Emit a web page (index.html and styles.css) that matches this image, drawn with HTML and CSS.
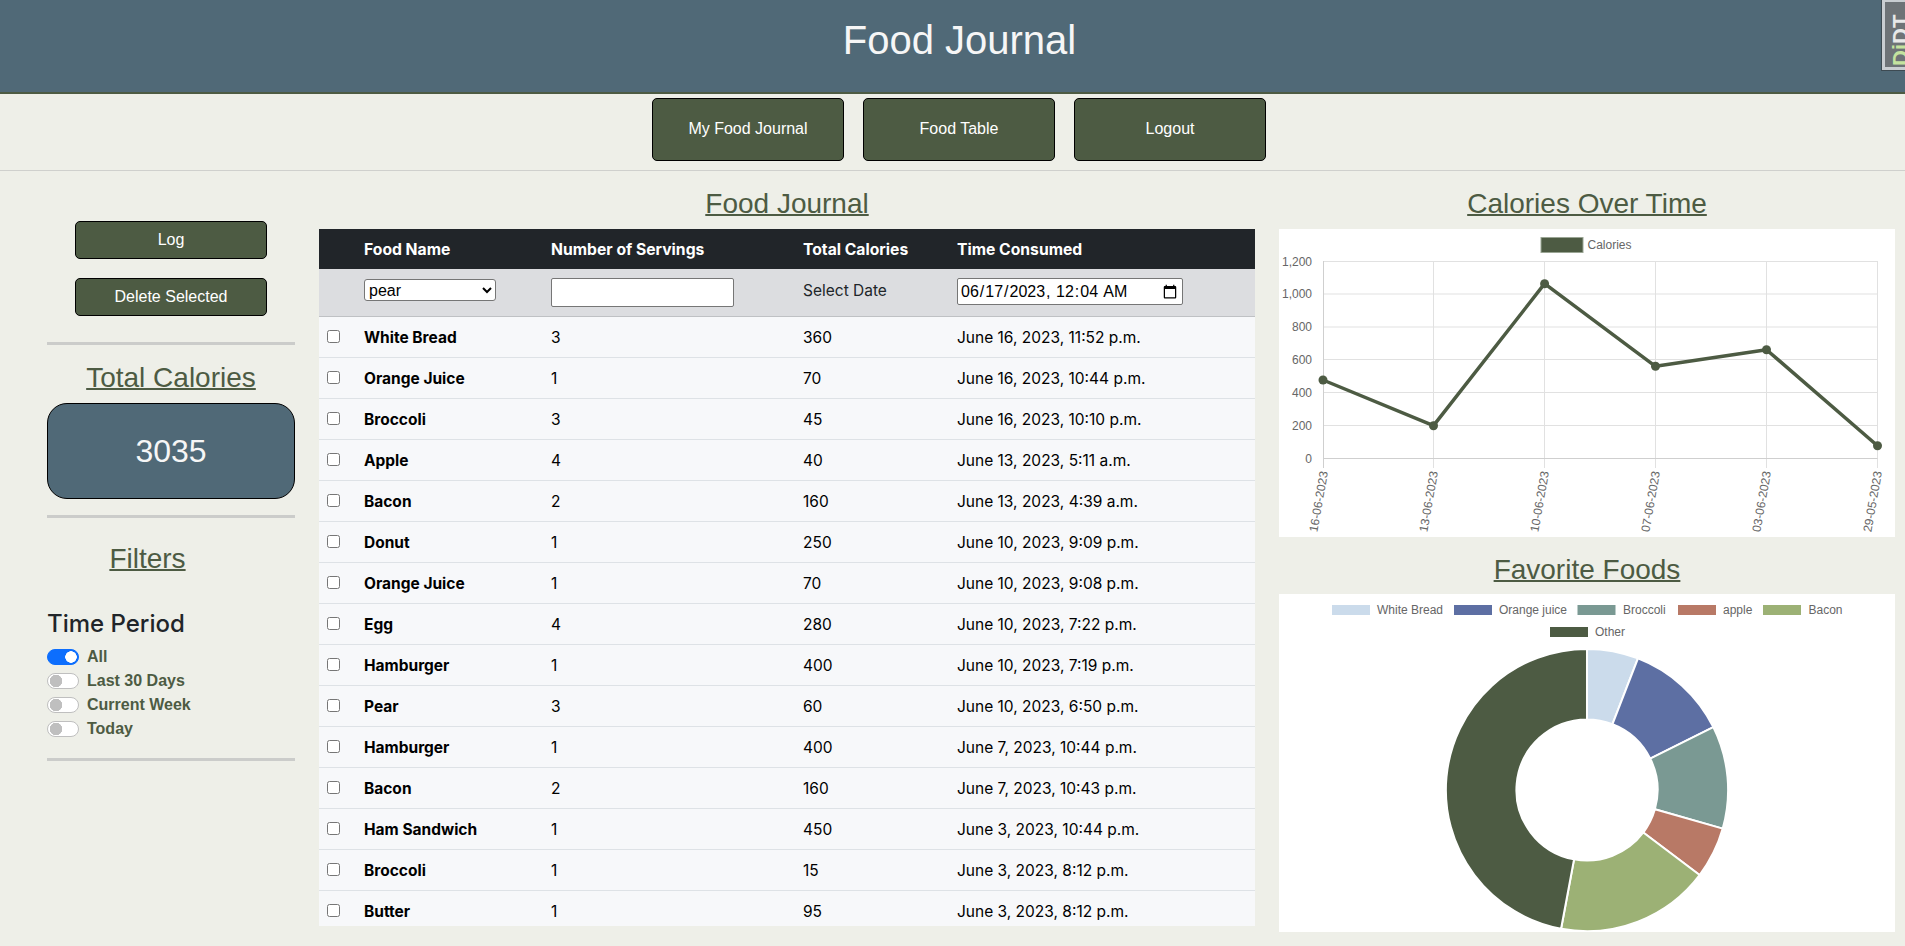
FILE: index.html
```html
<!DOCTYPE html>
<html lang="en">
<head>
<meta charset="utf-8">
<title>Food Journal</title>
<link rel="stylesheet" href="styles.css">
</head>
<body>
<header class="banner"><h1 class="banner-title">Food Journal</h1></header>
<a class="debug-handle" href="#"><span class="debug-text"><span class="debug-green">Dj</span>DT</span></a>
<nav class="nav">
  <button class="btn btn-nav">My Food Journal</button>
  <button class="btn btn-nav">Food Table</button>
  <button class="btn btn-nav">Logout</button>
</nav>
<main class="main">
  <aside class="side">
    <button class="btn btn-side">Log</button>
    <button class="btn btn-side btn-delete">Delete Selected</button>
    <hr class="rule rule-first">
    <h3 class="heading heading-total">Total Calories</h3>
    <div class="total-box">3035</div>
    <hr class="rule rule-second">
    <h3 class="heading heading-filters">Filters</h3>
    <h4 class="period-title">Time Period</h4>
    <label class="switch-row"><input class="switch" type="checkbox" checked><span>All</span></label>
    <label class="switch-row"><input class="switch" type="checkbox"><span>Last 30 Days</span></label>
    <label class="switch-row"><input class="switch" type="checkbox"><span>Current Week</span></label>
    <label class="switch-row"><input class="switch" type="checkbox"><span>Today</span></label>
    <hr class="rule rule-third">
  </aside>
  <section class="journal">
    <h3 class="heading">Food Journal</h3>
    <div class="table-wrap">
      <table class="table">
        <colgroup><col class="col-check"><col class="col-name"><col class="col-num"><col class="col-cal"><col class="col-time"></colgroup>
        <thead>
          <tr class="head-row"><th></th><th>Food Name</th><th>Number of Servings</th><th>Total Calories</th><th>Time Consumed</th></tr>
          <tr class="filter-row">
            <td></td>
            <td><select class="food-select"><option>pear</option></select></td>
            <td><input class="serv-input" type="text"></td>
            <td class="date-label">Select Date</td>
            <td><input class="date-input" type="datetime-local" value="2023-06-17T00:04"></td>
          </tr>
        </thead>
        <tbody>
          <tr><td><input type="checkbox" class="check"></td><th>White Bread</th><td>3</td><td>360</td><td>June 16, 2023, 11:52 p.m.</td></tr>
          <tr><td><input type="checkbox" class="check"></td><th>Orange Juice</th><td>1</td><td>70</td><td>June 16, 2023, 10:44 p.m.</td></tr>
          <tr><td><input type="checkbox" class="check"></td><th>Broccoli</th><td>3</td><td>45</td><td>June 16, 2023, 10:10 p.m.</td></tr>
          <tr><td><input type="checkbox" class="check"></td><th>Apple</th><td>4</td><td>40</td><td>June 13, 2023, 5:11 a.m.</td></tr>
          <tr><td><input type="checkbox" class="check"></td><th>Bacon</th><td>2</td><td>160</td><td>June 13, 2023, 4:39 a.m.</td></tr>
          <tr><td><input type="checkbox" class="check"></td><th>Donut</th><td>1</td><td>250</td><td>June 10, 2023, 9:09 p.m.</td></tr>
          <tr><td><input type="checkbox" class="check"></td><th>Orange Juice</th><td>1</td><td>70</td><td>June 10, 2023, 9:08 p.m.</td></tr>
          <tr><td><input type="checkbox" class="check"></td><th>Egg</th><td>4</td><td>280</td><td>June 10, 2023, 7:22 p.m.</td></tr>
          <tr><td><input type="checkbox" class="check"></td><th>Hamburger</th><td>1</td><td>400</td><td>June 10, 2023, 7:19 p.m.</td></tr>
          <tr><td><input type="checkbox" class="check"></td><th>Pear</th><td>3</td><td>60</td><td>June 10, 2023, 6:50 p.m.</td></tr>
          <tr><td><input type="checkbox" class="check"></td><th>Hamburger</th><td>1</td><td>400</td><td>June 7, 2023, 10:44 p.m.</td></tr>
          <tr><td><input type="checkbox" class="check"></td><th>Bacon</th><td>2</td><td>160</td><td>June 7, 2023, 10:43 p.m.</td></tr>
          <tr><td><input type="checkbox" class="check"></td><th>Ham Sandwich</th><td>1</td><td>450</td><td>June 3, 2023, 10:44 p.m.</td></tr>
          <tr><td><input type="checkbox" class="check"></td><th>Broccoli</th><td>1</td><td>15</td><td>June 3, 2023, 8:12 p.m.</td></tr>
          <tr><td><input type="checkbox" class="check"></td><th>Butter</th><td>1</td><td>95</td><td>June 3, 2023, 8:12 p.m.</td></tr>
        </tbody>
      </table>
    </div>
  </section>
  <section class="charts">
    <h3 class="heading">Calories Over Time</h3>
    <div class="chart chart-line">
      <svg class="chart-svg" width="616" height="308" viewBox="0 0 616 308">
        <rect class="swatch-line" x="262" y="8.5" width="42" height="15"/>
        <text class="legend-text" x="308.500" y="20">Calories</text>
        <g class="grid">
          <path d="M44.500 32.500H598.500M44.500 65H598.500M44.500 98H598.500M44.500 130.500H598.500M44.500 163.500H598.500M44.500 196.500H598.500"/>
          <path d="M154.500 32V239M265.500 32V239M376.500 32V239M487.500 32V239M598.500 32V239"/>
        </g>
        <path class="axis" d="M44.500 32V239M44.500 229.500H598.500"/>
        <g class="y-labels">
          <text x="33" y="36.500">1,200</text>
          <text x="33" y="69">1,000</text>
          <text x="33" y="102">800</text>
          <text x="33" y="135">600</text>
          <text x="33" y="168">400</text>
          <text x="33" y="201">200</text>
          <text x="33" y="234">0</text>
        </g>
        <g class="x-labels">
          <text transform="translate(49 243) rotate(-80)">16-06-2023</text>
          <text transform="translate(159 243) rotate(-80)">13-06-2023</text>
          <text transform="translate(270 243) rotate(-80)">10-06-2023</text>
          <text transform="translate(381 243) rotate(-80)">07-06-2023</text>
          <text transform="translate(492 243) rotate(-80)">03-06-2023</text>
          <text transform="translate(603 243) rotate(-80)">29-05-2023</text>
        </g>
        <polyline class="data-line" points="44,151 154.500,196.700 265.600,54.700 376.500,137.300 487.500,120.700 598.500,216.700"/>
        <g class="data-points">
          <circle cx="44" cy="151" r="4.500"/>
          <circle cx="154.500" cy="196.700" r="4.500"/>
          <circle cx="265.600" cy="54.700" r="4.500"/>
          <circle cx="376.500" cy="137.300" r="4.500"/>
          <circle cx="487.500" cy="120.700" r="4.500"/>
          <circle cx="598.500" cy="216.700" r="4.500"/>
        </g>
      </svg>
    </div>
    <h3 class="heading heading-fav">Favorite Foods</h3>
    <div class="chart chart-donut">
      <svg class="chart-svg" width="616" height="338" viewBox="0 0 616 338">
        <rect class="s1" x="53" y="11" width="38" height="10"/><text class="legend-text" x="98" y="20">White Bread</text>
        <rect class="s2" x="175" y="11" width="38" height="10"/><text class="legend-text" x="220" y="20">Orange juice</text>
        <rect class="s3" x="298.500" y="11" width="38" height="10"/><text class="legend-text" x="344" y="20">Broccoli</text>
        <rect class="s4" x="399" y="11" width="38" height="10"/><text class="legend-text" x="444" y="20">apple</text>
        <rect class="s5" x="484" y="11" width="38" height="10"/><text class="legend-text" x="529.500" y="20">Bacon</text>
        <rect class="s6" x="271" y="33" width="38" height="10"/><text class="legend-text" x="316" y="42">Other</text>
        <g class="slices" transform="translate(308 196) scale(1.008) translate(-308 -196)">
          <path class="s1" d="M308 56A140 140 0 0 1 358.570 65.450L333.280 130.730A70 70 0 0 0 308 126Z"/>
          <path class="s2" d="M358.570 65.450A140 140 0 0 1 433.330 133.600L370.660 164.800A70 70 0 0 0 333.280 130.730Z"/>
          <path class="s3" d="M433.330 133.600A140 140 0 0 1 442.650 234.320L375.330 215.160A70 70 0 0 0 370.660 164.800Z"/>
          <path class="s4" d="M442.650 234.320A140 140 0 0 1 419.720 280.360L363.860 238.180A70 70 0 0 0 375.330 215.160Z"/>
          <path class="s5" d="M419.720 280.360A140 140 0 0 1 282.280 333.620L295.140 264.810A70 70 0 0 0 363.860 238.180Z"/>
          <path class="s6" d="M282.280 333.620A140 140 0 0 1 308 56L308 126A70 70 0 0 0 295.140 264.810Z"/>
        </g>
      </svg>
    </div>
  </section>
</main>
</body>
</html>
```
FILE: styles.css
```css
* { box-sizing: border-box; }
html, body { margin: 0; height: 100%; overflow: hidden; }
body {
  background: #eeefe8;
  font-family: "Liberation Sans", Arial, sans-serif;
  font-size: 16px;
  color: #212529;
}
.banner {
  background: #506977;
  border-bottom: 2px solid #4d5b43;
  padding: 16px 0 28px 14px;
  text-align: center;
}
.banner-title {
  margin: 0;
  font-size: 40px;
  line-height: 48px;
  font-weight: 400;
  color: #f6f6f6;
}
.debug-handle {
  position: absolute;
  top: 0;
  right: 0;
  width: 23px;
  height: 70px;
  overflow: hidden;
  background: #6e7377;
  border: 3px solid #c9cdd1;
  border-top-width: 2px;
  border-right: 0;
  outline: 1px solid #3d4a52;
  text-decoration: none;
}
.debug-text {
  display: block;
  writing-mode: vertical-rl;
  transform: rotate(180deg);
  font: bold 22px/22px "Liberation Sans", sans-serif;
  color: #e8e8e8;
  height: 64px;
  margin-left: 5px;
  text-align: left;
  white-space: nowrap;
}
.debug-green { color: #c4e39f; }
.nav {
  display: flex;
  justify-content: center;
  gap: 19px;
  padding: 4px 0 9px 13px;
  border-bottom: 1px solid #cfd0cd;
  height: 77px;
}
.btn {
  display: block;
  background: #4d5b43;
  color: #fff;
  border: 1px solid #000;
  border-radius: 5px;
  font-family: "Liberation Sans", Arial, sans-serif;
  font-size: 16px;
  padding: 0;
}
.btn-nav { width: 192px; height: 63px; padding-bottom: 2px; }
.btn-side { width: 192px; height: 38px; }
.btn-delete { margin-top: 19px; }
.main {
  display: flex;
  gap: 24px;
  padding: 0 10px 0 47px;
}
.side {
  width: 248px;
  flex: none;
  padding-top: 50px;
  display: flex;
  flex-direction: column;
}
.side .btn { align-self: center; }
.rule {
  width: 100%;
  height: 3px;
  margin: 0;
  border: 0;
  background: #cbccca;
}
.rule-first { margin-top: 26px; }
.rule-second { margin-top: 16px; }
.rule-third { margin-top: 17px; }
.heading {
  margin: 0 0 8px;
  font-size: 28px;
  line-height: 34px;
  font-weight: 400;
  color: #4d5b43;
  text-align: center;
  text-decoration: underline;
  text-decoration-thickness: 2px;
}
.heading-total { margin: 16px 0 8px; }
.heading-filters { margin: 24px 0 0; padding-right: 47px; }
.period-title {
  margin: 33px 0 0;
  font-family: Inter, sans-serif;
  font-size: 24px;
  line-height: 29px;
  font-weight: 500;
  color: #212529;
}
.total-box {
  height: 96px;
  background: #506977;
  border: 1px solid #000;
  border-radius: 20px;
  color: #f6f6f6;
  font-size: 32px;
  display: flex;
  align-items: center;
  justify-content: center;
}
.switch-row {
  display: flex;
  align-items: center;
  gap: 8px;
  height: 24px;
  font-weight: 700;
  color: #4d5b43;
}
.period-title + .switch-row { margin-top: 7px; }
.switch {
  appearance: none;
  width: 32px;
  height: 16px;
  margin: 0;
  flex: none;
  border: 1px solid #bfbfbf;
  border-radius: 8px;
  background: #fff radial-gradient(circle at 8px 7px, #bfbfbf 6px, transparent 6.5px);
}
.switch:checked {
  border-color: #0d6efd;
  background: #0d6efd radial-gradient(circle at 23px 7px, #fff 5.5px, transparent 6px);
}
.journal { width: 936px; flex: none; padding-top: 16px; }
.table-wrap { height: 697px; overflow: hidden; background: #f7f8fa; }
.table {
  width: 936px;
  table-layout: fixed;
  border-collapse: collapse;
  font-family: Inter, sans-serif;
  font-size: 15.5px;
  line-height: 24px;
  color: #000;
}
.col-check { width: 37px; }
.col-name { width: 187px; }
.col-num { width: 252px; }
.col-cal { width: 154px; }
.col-time { width: 306px; }
.table th, .table td {
  padding: 9px 8px 7px;
  text-align: left;
  vertical-align: top;
}
.table th { font-weight: 700; }
.head-row th { background: #212529; color: #fff; height: 40px; font-size: 15.7px; }
.table .filter-row td {
  background: #dcdde0;
  padding: 9px 8px;
  border-bottom: 1px solid #bfc1c4;
  color: #212529;
}
.table .filter-row .date-label { padding-top: 10px; padding-bottom: 8px; }
.table tbody td, .table tbody th {
  border-bottom: 1px solid #dee2e6;
  height: 41px;
}
.check { display: block; width: 13px; height: 13px; margin: 4px 0 0; }
.food-select {
  display: block;
  width: 132px;
  height: 22px;
  margin-top: 1px;
  padding-left: 0;
  font: 16px "Liberation Sans", sans-serif;
  background: #fff;
  border: 1px solid #767676;
  border-radius: 3px;
}
.serv-input {
  display: block;
  width: 183px;
  height: 29px;
  font: 16px "Liberation Sans", sans-serif;
  background: #fff;
  border: 1px solid #767676;
  border-radius: 2px;
}
.date-input {
  display: block;
  width: 226px;
  height: 27px;
  padding: 1px 2px;
  font: 16px "Liberation Sans", sans-serif;
  background: #fff;
  border: 1px solid #767676;
  border-radius: 2px;
}
.charts { width: 616px; flex: none; padding-top: 16px; }
.chart { background: #fff; }
.chart-line { height: 308px; }
.chart-donut { height: 338px; }
.chart-svg { display: block; }
.heading-fav { margin: 16px 0 7px; }
.swatch-line { fill: #4d5b43; stroke: #9aa594; stroke-width: 1; }
.legend-text {
  font: 12px "Liberation Sans", sans-serif;
  fill: #666;
}
.grid path { fill: none; stroke: #e1e1e1; stroke-width: 1; }
.axis { fill: none; stroke: #cfcfcf; stroke-width: 1; }
.y-labels text {
  font: 12px "Liberation Sans", sans-serif;
  fill: #666;
  text-anchor: end;
}
.x-labels text {
  font: 12px "Liberation Sans", sans-serif;
  fill: #666;
  text-anchor: end;
}
.data-line { fill: none; stroke: #4d5b43; stroke-width: 3.5; stroke-linejoin: round; }
.data-points circle { fill: #4d5b43; }
.slices path { stroke: #fff; stroke-width: 2; stroke-linejoin: round; }
.s1 { fill: #cbdbeb; }
.s2 { fill: #5d6fa3; }
.s3 { fill: #7a9993; }
.s4 { fill: #b87966; }
.s5 { fill: #9cb175; }
.s6 { fill: #4d5b43; }
```
